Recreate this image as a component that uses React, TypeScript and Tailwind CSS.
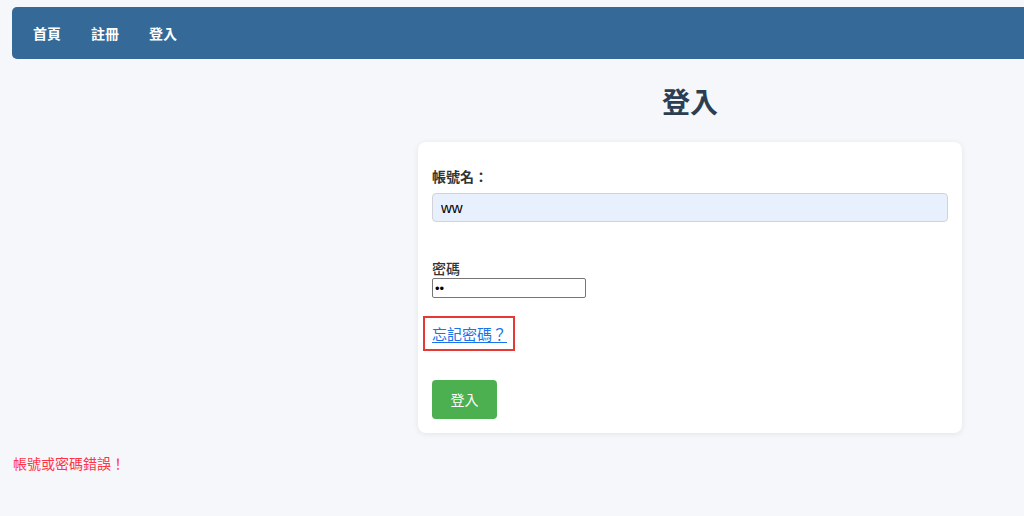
import React, { useState } from 'react';

const font = { fontFamily: '"Noto Sans CJK TC", "Noto Sans", sans-serif' };
const arial = { fontFamily: '"Liberation Sans", Arial, sans-serif' };

export default function App() {
  const [username, setUsername] = useState('ww');
  const [password, setPassword] = useState('ww');

  return (
    <div className="w-full h-[516px] overflow-hidden bg-[#f5f7fb]" style={font}>
      <div className="w-[1380px]">
        <nav className="mx-3 mt-[7px] h-[52px] rounded-[5px] bg-[#356a98] flex items-center pl-[21px] gap-[30px]">
          <a className="text-white text-[14px] font-bold leading-5">首頁</a>
          <a className="text-white text-[14px] font-bold leading-5">註冊</a>
          <a className="text-white text-[14px] font-bold leading-5">登入</a>
        </nav>

        <h2 className="mt-[22px] text-center text-[28px] font-bold leading-[40px] text-[#2c3e50]">登入</h2>

        <div className="mx-auto mt-[21px] w-[544px] rounded-lg bg-white shadow-[0_1px_6px_rgba(0,0,0,0.08)] px-[14px] pt-[24px] pb-[14px]">
          <label className="block text-[14px] font-bold leading-5 text-[#333]">帳號名：</label>
          <input
            className="mt-[7px] block w-full h-[29px] rounded-[4px] border border-[#d0d4da] bg-[#e8f0fe] px-[8px] text-[15px] text-black outline-none"
            style={arial}
            value={username}
            onChange={(e) => setUsername(e.target.value)}
          />

          <label className="mt-[36px] block text-[14px] font-medium leading-5 text-[#333]">密碼</label>
          <input
            type="password"
            className="block w-[154px] h-[20px] rounded-[2px] border border-[#767676] bg-white px-[2px] text-[13px] outline-none"
            style={arial}
            value={password}
            onChange={(e) => setPassword(e.target.value)}
          />

          <div className="mt-[18px] flex">
            <span className="-ml-[9px] flex items-center h-[35px] border-2 border-[#e53935] pl-[7px] pr-[6px]">
              <a className="text-[15px] leading-5 text-[#1a73e8] underline underline-offset-2 cursor-pointer">忘記密碼？</a>
            </span>
          </div>

          <button className="mt-[29px] block h-[39px] w-[65px] rounded-[4px] bg-[#4caf50] text-[14px] text-white">登入</button>
        </div>

        <p className="mt-[20px] ml-[13px] text-[14px] leading-5 text-[#ff3347]">帳號或密碼錯誤！</p>
      </div>
    </div>
  );
}
